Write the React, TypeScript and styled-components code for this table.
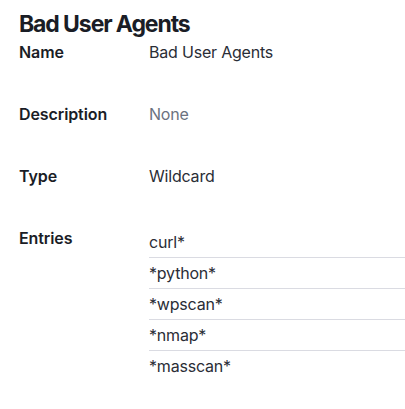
import React from "react";
import styled, { createGlobalStyle } from "styled-components";

const Global = createGlobalStyle`
  html, body { margin: 0; padding: 0; background: #ffffff; }
  body { font-family: Inter, "Noto Sans", sans-serif; -webkit-font-smoothing: antialiased; }
`;

const Page = styled.div`
  padding: 8px 0 0 19px;
  display: flex;
  flex-direction: column;
`;

const Title = styled.h1`
  margin: 0;
  font-size: 23px;
  line-height: 32px;
  font-weight: 700;
  letter-spacing: -1.1px;
  color: #1a1d26;
`;

const List = styled.dl`
  margin: 0;
  display: flex;
  flex-direction: column;
  gap: 38px;
`;

const Row = styled.div`
  display: grid;
  grid-template-columns: 130px 1fr;
`;

const Label = styled.dt`
  font-size: 16px;
  line-height: 24px;
  font-weight: 600;
  letter-spacing: -0.1px;
  color: #1a1d26;
`;

const Value = styled.dd<{ $muted?: boolean }>`
  margin: 0;
  font-size: 16px;
  line-height: 24px;
  font-weight: 400;
  letter-spacing: -0.2px;
  color: ${(p) => (p.$muted ? "#6b7280" : "#2a2d36")};
`;

const Entries = styled.ul`
  margin: 1px 0 0 0;
  padding: 0;
  list-style: none;
`;

const Entry = styled.li`
  padding: 3px 0;
  font-size: 16px;
  line-height: 24px;
  letter-spacing: -0.2px;
  color: #2a2d36;
  & + & {
    border-top: 1px solid #dadbe2;
  }
`;

const entries = ["curl*", "*python*", "*wpscan*", "*nmap*", "*masscan*"];

export default function App() {
  return (
    <>
      <Global />
      <Page>
        <Title>Bad User Agents</Title>
        <List>
          <Row>
            <Label>Name</Label>
            <Value>Bad User Agents</Value>
          </Row>
          <Row>
            <Label>Description</Label>
            <Value $muted>None</Value>
          </Row>
          <Row>
            <Label>Type</Label>
            <Value>Wildcard</Value>
          </Row>
          <Row>
            <Label>Entries</Label>
            <Value>
              <Entries>
                {entries.map((e) => (
                  <Entry key={e}>{e}</Entry>
                ))}
              </Entries>
            </Value>
          </Row>
        </List>
      </Page>
    </>
  );
}
